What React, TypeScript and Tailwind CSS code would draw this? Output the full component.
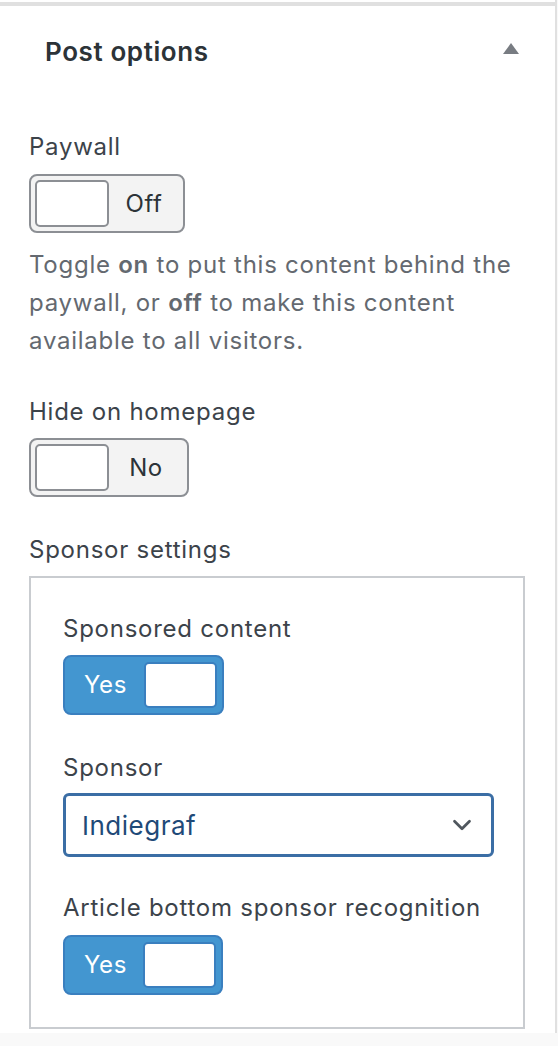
import { ChevronDown } from 'lucide-react'

interface ToggleProps {
  on: boolean
  onLabel: string
  offLabel: string
  width: string
}

function Toggle({ on, onLabel, offLabel, width }: ToggleProps) {
  if (on) {
    return (
      <div
        className={`flex h-[60px] ${width} items-center rounded-[8px] border-2 border-[#3a7fbf] bg-[#4396d0] p-[5px]`}
      >
        <span className="flex-1 pl-[14px] text-[24px] tracking-[0.6px] text-white">{onLabel}</span>
        <span className="h-[46px] w-[73px] rounded-[5px] border-2 border-[#3a7fbf] bg-white" />
      </div>
    )
  }
  return (
    <div
      className={`flex h-[59px] ${width} items-center rounded-[8px] border-2 border-[#8c8f94] bg-[#f3f3f3] p-[4px]`}
    >
      <span className="h-[47px] w-[74px] rounded-[5px] border-2 border-[#8c8f94] bg-white" />
      <span className="flex-1 text-center text-[24px] tracking-[0.6px] text-[#2c3338]">{offLabel}</span>
    </div>
  )
}

export default function App() {
  return (
    <div
      className="min-h-[1046px] bg-[#f9f9f9] text-[#3c434a]"
      style={{ fontFamily: 'Inter, "Noto Sans", sans-serif' }}
    >
      <div className="w-[557px] border-r-2 border-[#e0e0e0] bg-white pt-[2px] tracking-[0.75px]">
        {/* верхняя полоса */}
        <div className="h-[4px] bg-[#e0e0e0]" />

        {/* заголовок */}
        <div className="flex h-[90px] items-center justify-between pl-[45px] pr-[36px] pt-[1px]">
          <h2 className="text-[26px] font-semibold tracking-[0.6px] text-[#2c3338]">Post options</h2>
          <svg width="16" height="11" viewBox="0 0 16 11" className="mb-[6px]">
            <path d="M8 0 L16 11 L0 11 Z" fill="#787c82" />
          </svg>
        </div>

        <div className="px-[29px] pb-[4px] pt-[37px]">
          {/* Paywall */}
          <p className="text-[24px] leading-[28px]">Paywall</p>
          <div className="mt-[13px]">
            <Toggle on={false} onLabel="On" offLabel="Off" width="w-[156px]" />
          </div>
          <p className="mt-[13px] text-[24px] leading-[38px] text-[#646970]">
            Toggle <b className="font-semibold">on</b> to put this content behind the paywall, or{' '}
            <b className="font-semibold">off</b> to make this content available to all visitors.
          </p>

          {/* Hide on homepage */}
          <p className="mt-[38px] text-[24px] leading-[28px]">Hide on homepage</p>
          <div className="mt-[12px]">
            <Toggle on={false} onLabel="Yes" offLabel="No" width="w-[160px]" />
          </div>

          {/* Sponsor settings */}
          <p className="mt-[39px] text-[24px] leading-[28px]">Sponsor settings</p>
          <div className="mt-[12px] w-[496px] border-2 border-[#c9ccd0] px-[32px] pb-[32px] pt-[37px]">
            <p className="text-[24px] leading-[28px]">Sponsored content</p>
            <div className="mt-[12px]">
              <Toggle on onLabel="Yes" offLabel="No" width="w-[161px]" />
            </div>

            <p className="mt-[39px] text-[24px] leading-[28px]">Sponsor</p>
            <div className="mt-[11px] flex h-[64px] w-[431px] items-center justify-between rounded-[6px] border-[3px] border-[#3b6ea5] bg-white pl-[16px] pr-[14px]">
              <span className="text-[26px] tracking-[0.5px] text-[#1f4a78]">Indiegraf</span>
              <ChevronDown className="h-[30px] w-[30px] text-[#50575e]" strokeWidth={2.2} />
            </div>

            <p className="mt-[37px] text-[24px] leading-[28px]">Article bottom sponsor recognition</p>
            <div className="mt-[13px]">
              <Toggle on onLabel="Yes" offLabel="No" width="w-[160px]" />
            </div>
          </div>
        </div>
      </div>
    </div>
  )
}
